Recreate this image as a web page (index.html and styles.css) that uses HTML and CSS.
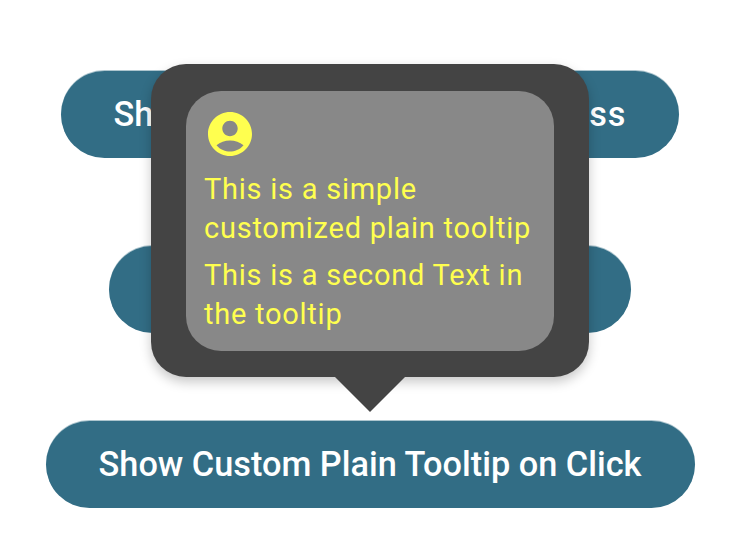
FILE: index.html
```html
<!DOCTYPE html>
<html lang="en">
<head>
<meta charset="utf-8">
<title>Plain tooltip</title>
<link rel="stylesheet" href="styles.css">
</head>
<body>
<main class="stack">
  <button class="btn btn-long"><span>Sh</span><span class="label-end">ess</span></button>
  <button class="btn btn-short"></button>
  <button class="btn btn-click">Show Custom Plain Tooltip on Click</button>
  <div class="tooltip" role="tooltip">
    <div class="panel">
      <svg class="icon" viewBox="2 2 20 20"><path fill-rule="evenodd" d="M12 2C6.480 2 2 6.480 2 12s4.480 10 10 10 10-4.480 10-10S17.520 2 12 2zM12 6c1.930 0 3.500 1.570 3.500 3.500S13.930 13 12 13s-3.500-1.570-3.500-3.500S10.070 6 12 6zM12 20c-2.030 0-4.430-.82-6.140-2.880C7.550 15.800 9.680 15 12 15s4.450.8 6.140 2.120C16.430 19.180 14.030 20 12 20z"/></svg>
      <p class="first">This is a simple<br>customized plain tooltip</p>
      <p class="second">This is a second Text in<br>the tooltip</p>
    </div>
    <svg class="caret" viewBox="0 0 70 35"><path d="M0 0H70L35 35Z"/></svg>
  </div>
</main>
</body>
</html>
```
FILE: styles.css
```css
* { box-sizing: border-box; }
body {
  margin: 0;
  background: #fff;
  font-family: Roboto, sans-serif;
}
.stack {
  position: relative;
  width: 740px;
  height: 556px;
  padding-top: 71px;
  display: flex;
  flex-direction: column;
  align-items: center;
  gap: 88px;
}
.btn {
  height: 87px;
  flex: none;
  border: 0;
  border-radius: 44px;
  padding: 0 52.5px;
  background: #326d85;
  color: #fff;
  font: 500 34.3px/87px Roboto, sans-serif;
  white-space: nowrap;
  box-shadow: 0 -1px 0 rgba(50, 109, 133, .4);
}
.btn-long {
  width: 618px;
  display: flex;
  justify-content: space-between;
}
.label-end { letter-spacing: 1px; }
.btn-short { width: 522px; }
.btn-click { width: 649px; }
.tooltip {
  position: absolute;
  left: 151px;
  top: 64px;
  width: 438px;
  height: 313px;
  padding: 27px 35px 26px;
  border-radius: 35px;
  background: #444;
  box-shadow: 0 5px 12px rgba(0, 0, 0, .22);
}
.panel {
  height: 260px;
  padding: 21px 18px 0;
  border-radius: 35px;
  background: #888;
  color: #ffff4f;
  font-size: 29px;
  line-height: 39px;
  letter-spacing: .75px;
  white-space: nowrap;
}
.icon {
  display: block;
  width: 44px;
  height: 44px;
  margin-left: 4px;
  margin-top: .4px;
  fill: currentColor;
}
p { margin: 0; }
.first { margin-top: 14px; }
.second { margin-top: 8px; }
.caret {
  position: absolute;
  left: 184px;
  top: 313px;
  width: 70px;
  height: 35px;
  fill: #444;
}
```
